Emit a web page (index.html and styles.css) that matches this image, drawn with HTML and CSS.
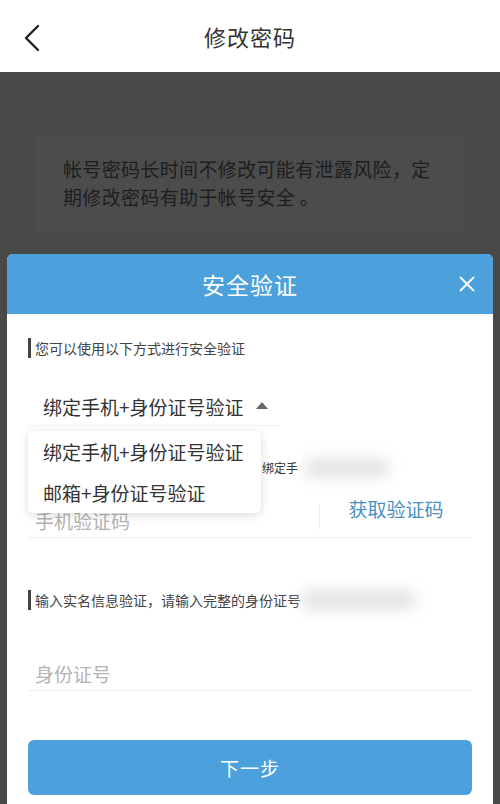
FILE: index.html
```html
<!DOCTYPE html>
<html lang="zh-CN">
<head>
<meta charset="utf-8">
<title>修改密码</title>
<link rel="stylesheet" href="styles.css">
</head>
<body>
<div class="screen">
  <header class="topbar">
    <svg class="back" width="20" height="30" viewBox="0 0 20 30"><path d="M15 3 L3 15 L15 27" fill="none" stroke="#222" stroke-width="2.4" stroke-linecap="round" stroke-linejoin="round"/></svg>
    <h1 class="title">修改密码</h1>
  </header>
  <main class="page">
    <div class="notice">帐号密码长时间不修改可能有泄露风险，定期修改密码有助于帐号安全 。</div>
  </main>
  <div class="mask"></div>
  <section class="dialog">
    <div class="dialog-head">
      <span class="dialog-title">安全验证</span>
      <svg class="close" width="16" height="16" viewBox="0 0 16 16"><path d="M1.5 1.5 L14.5 14.5 M14.5 1.5 L1.5 14.5" stroke="#fff" stroke-width="1.8" stroke-linecap="round"/></svg>
    </div>
    <div class="dialog-body">
      <div class="label">您可以使用以下方式进行安全验证</div>
      <div class="select">
        <span>绑定手机+身份证号验证</span>
        <span class="caret"></span>
        <ul class="menu">
          <li>绑定手机+身份证号验证</li>
          <li>邮箱+身份证号验证</li>
        </ul>
      </div>
      <div class="sub-label">绑定手<span class="blur b1"></span></div>
      <div class="field">
        <span class="placeholder">手机验证码</span>
        <span class="sep"></span>
        <span class="getcode">获取验证码</span>
      </div>
      <div class="label label2">输入实名信息验证，请输入完整的身份证号<span class="blur b2"></span></div>
      <div class="field field2">
        <span class="placeholder">身份证号</span>
      </div>
      <button class="next">下一步</button>
    </div>
  </section>
</div>
</body>
</html>
```
FILE: styles.css
```css
* { box-sizing: border-box; margin: 0; padding: 0; }
body {
  margin: 0;
  font-family: "Noto Sans CJK SC", "Noto Sans", sans-serif;
  background: #f3f3f3;
}
.screen {
  position: relative;
  width: 500px;
  height: 804px;
  overflow: hidden;
  background: #f3f3f3;
}
.topbar {
  position: relative;
  z-index: 3;
  height: 72px;
  background: #fff;
  display: flex;
  align-items: center;
  justify-content: center;
}
.back {
  position: absolute;
  left: 23px;
  top: 23px;
}
.title {
  font-size: 22px;
  font-weight: 400;
  color: #333;
  letter-spacing: 1px;
}
.page {
  padding: 63px 35px 0 35px;
}
.notice {
  background: #fff;
  padding: 20px 26px 21px 28px;
  font-size: 19px;
  line-height: 28px;
  color: #666;
  letter-spacing: 0.35px;
}
.mask {
  position: absolute;
  left: 0; right: 0; top: 72px; bottom: 0;
  background: rgba(0,0,0,0.7);
  z-index: 1;
}
.dialog {
  position: absolute;
  z-index: 2;
  left: 7px;
  right: 7px;
  top: 254px;
  bottom: -20px;
  background: #fff;
  border-radius: 6px 6px 0 0;
}
.dialog-head {
  position: relative;
  height: 60px;
  background: #4ca0db;
  border-radius: 6px 6px 0 0;
  display: flex;
  align-items: center;
  justify-content: center;
}
.dialog-title {
  font-size: 23px;
  color: #fff;
  letter-spacing: 1px;
}
.close {
  position: absolute;
  right: 18px;
  top: 22px;
}
.dialog-body {
  padding: 24px 21px 0 21px;
  display: flex;
  flex-direction: column;
}
.label {
  height: 20px;
  line-height: 20px;
  font-size: 14px;
  color: #444;
  border-left: 3px solid #444;
  padding-left: 4px;
  display: flex;
  align-items: center;
  white-space: nowrap;
}
.select {
  position: relative;
  margin-top: 29px;
  width: 252px;
  height: 39px;
  border-bottom: 1px solid #f0f0f0;
  padding-left: 15px;
  display: flex;
  align-items: center;
  font-size: 19px;
  color: #333;
}
.caret {
  margin-left: 12px;
  width: 0; height: 0;
  border-left: 6px solid transparent;
  border-right: 6px solid transparent;
  border-bottom: 7px solid #666;
  margin-top: -2px;
}
.menu {
  position: absolute;
  left: 0;
  top: 44px;
  width: 233px;
  list-style: none;
  background: #fff;
  border-radius: 5px;
  box-shadow: 0 2px 10px rgba(0,0,0,0.15);
  padding: 0;
  z-index: 5;
}
.menu li {
  height: 41px;
  line-height: 41px;
  padding-left: 15px;
  font-size: 19px;
  color: #333;
}
.sub-label {
  margin-top: 32px;
  height: 20px;
  line-height: 20px;
  font-size: 12px;
  color: #333;
  padding-left: 234px;
  display: flex;
  align-items: center;
  white-space: nowrap;
}
.blur {
  display: inline-block;
  height: 20px;
  background: #e4e4e4;
  border-radius: 10px;
  filter: blur(7px);
}
.b1 { width: 86px; margin-left: 6px; }
.b2 { width: 116px; margin-left: 0; }
.field {
  margin-top: 25px;
  height: 35px;
  border-bottom: 1px solid #eeeeee;
  display: flex;
  align-items: center;
  padding-left: 7px;
  font-size: 19px;
}
.placeholder {
  color: #b3b3b3;
  flex: 1;
}
.sep {
  width: 1px;
  height: 26px;
  background: #f0f0f0;
  margin-top: -6px;
}
.getcode {
  width: 152px;
  text-align: center;
  color: #4a90c4;
  margin-top: -24px;
}
.label2 {
  margin-top: 52px;
}
.field2 {
  margin-top: 46px;
}
.next {
  margin-top: 49px;
  height: 55px;
  border: none;
  border-radius: 6px;
  background: #4ca0db;
  color: #fff;
  font-family: inherit;
  font-size: 19px;
  letter-spacing: 1px;
}
```
